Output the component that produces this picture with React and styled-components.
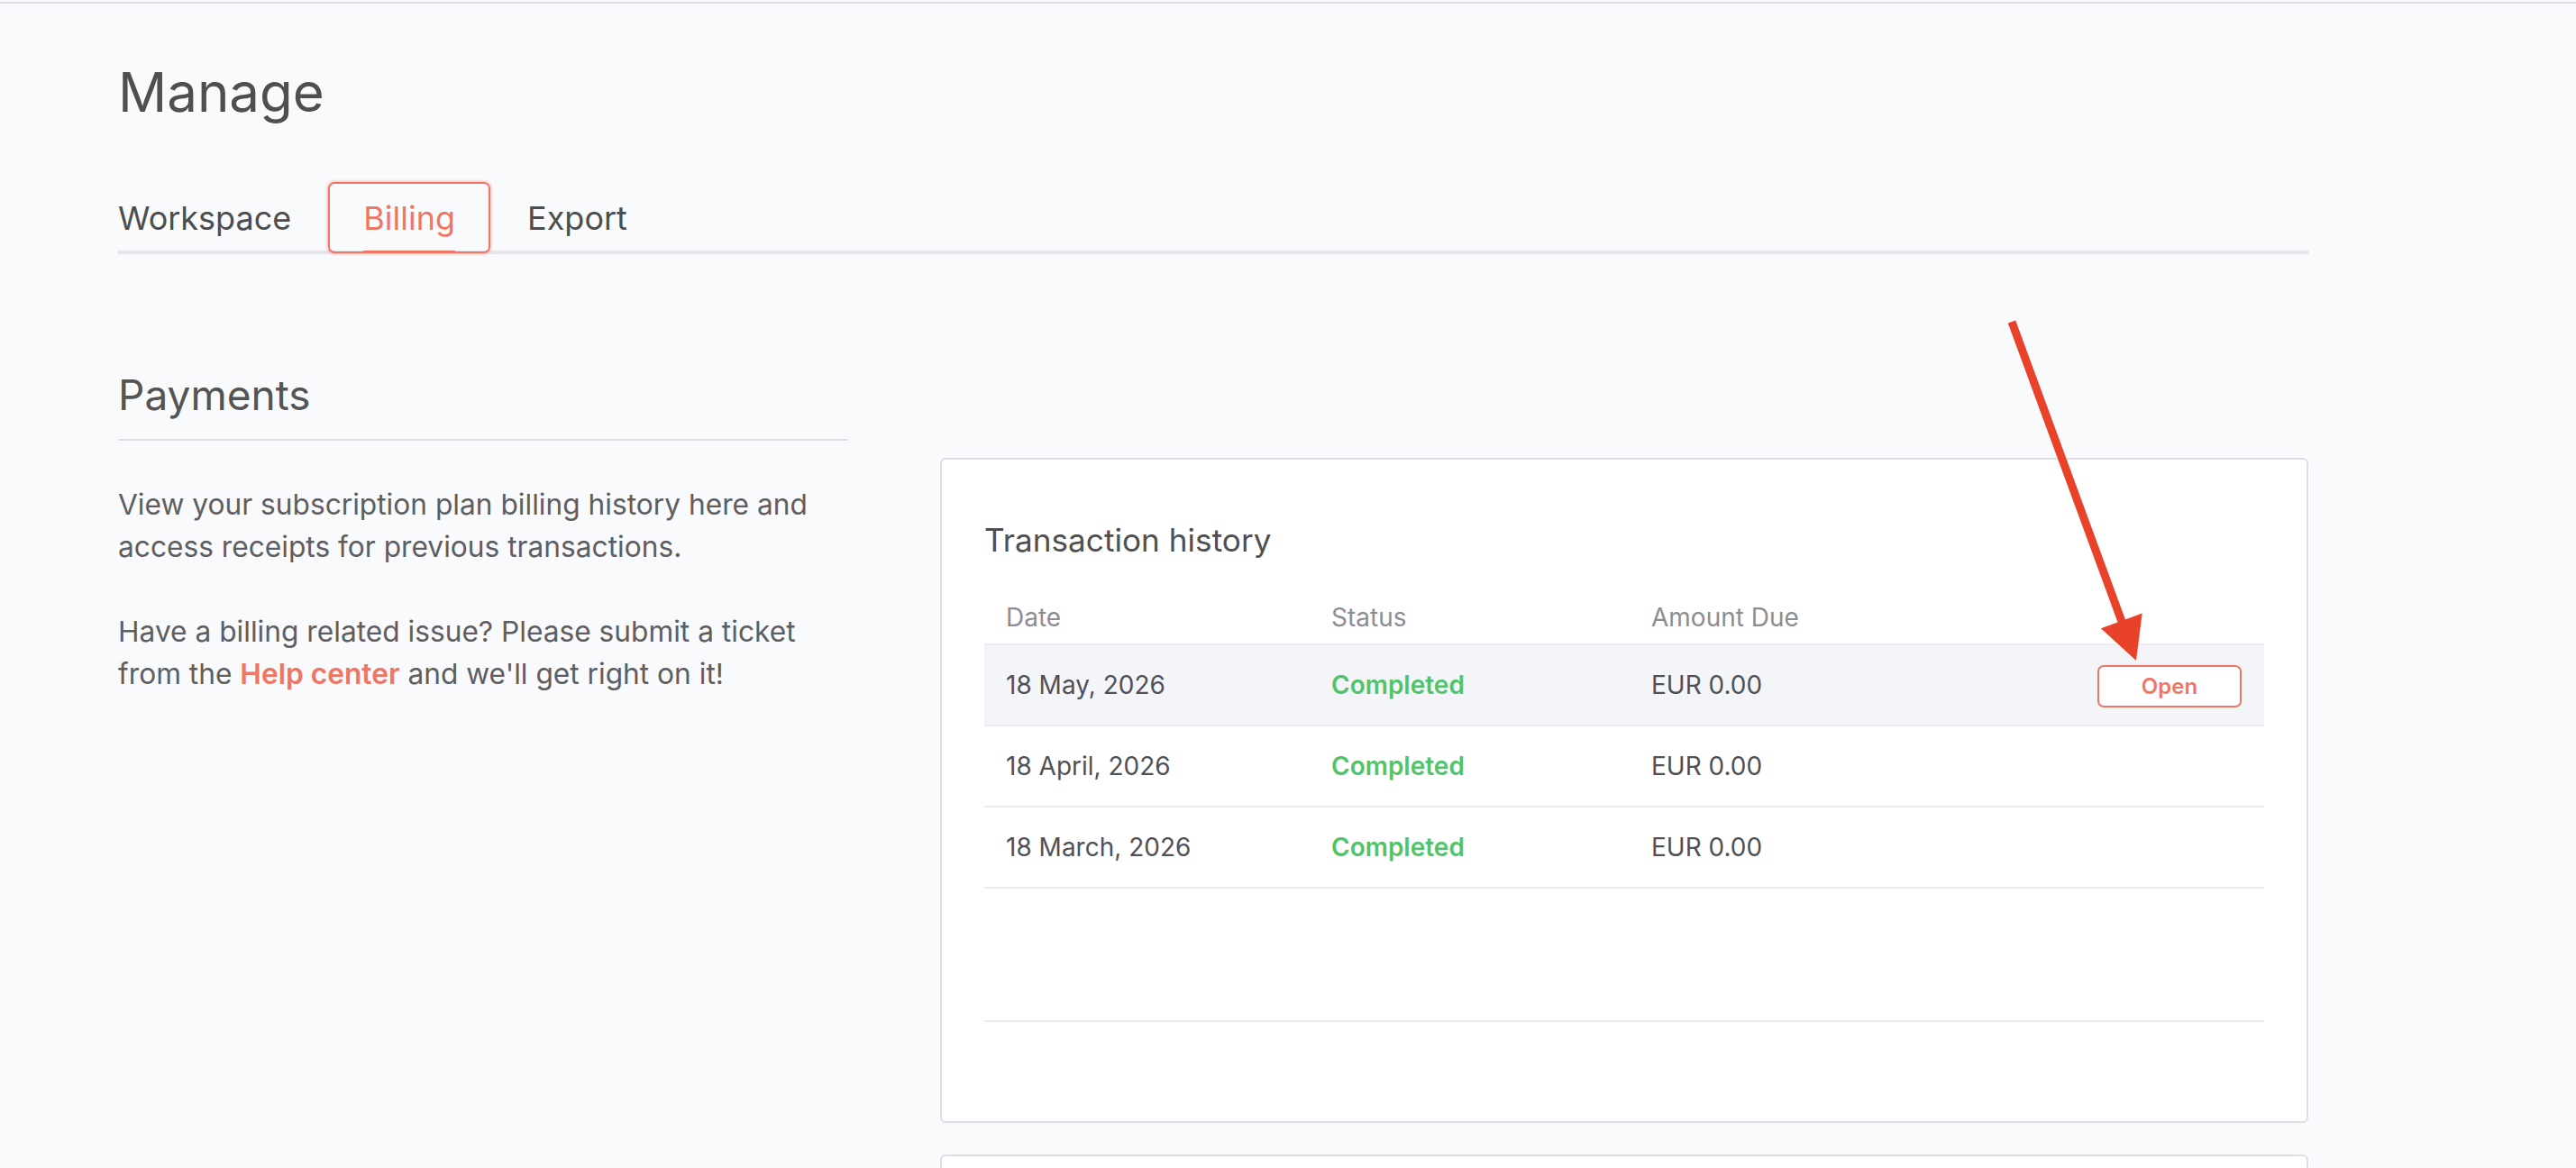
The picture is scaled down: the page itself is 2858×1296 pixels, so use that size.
import styled, { createGlobalStyle } from "styled-components";

const ORANGE = "#ef7664";

const TRANSACTIONS = [
  { date: "18 May, 2026", status: "Completed", amount: "EUR 0.00", open: true },
  { date: "18 April, 2026", status: "Completed", amount: "EUR 0.00" },
  { date: "18 March, 2026", status: "Completed", amount: "EUR 0.00" },
];

const TABS = ["Workspace", "Billing", "Export"];

const App = () => {
  return (
    <Root>
      <GlobalStyle />
      <Page>
        <Main>
          <Title>Manage</Title>
          <TabBar>
            {TABS.map((tab) => (
              <Tab key={tab} active={tab === "Billing"}>
                {tab}
              </Tab>
            ))}
          </TabBar>

          <Section>
            <Side>
              <SideHeading>Payments</SideHeading>
              <Text>
                View your subscription plan billing history here and access
                receipts for previous transactions.
              </Text>
              <Text>
                Have a billing related issue? Please submit a ticket from the{" "}
                <HelpLink>Help center</HelpLink> and we'll get right on it!
              </Text>
            </Side>

            <Cards>
              <Card>
                <CardTitle>Transaction history</CardTitle>
                <Table>
                  <HeadRow>
                    <HeadCell>Date</HeadCell>
                    <HeadCell>Status</HeadCell>
                    <HeadCell>Amount Due</HeadCell>
                    <HeadCell />
                  </HeadRow>
                  {TRANSACTIONS.map((t) => (
                    <Row key={t.date} highlighted={t.open}>
                      <Cell>{t.date}</Cell>
                      <StatusCell>{t.status}</StatusCell>
                      <Cell>{t.amount}</Cell>
                      <Cell>{t.open && <OpenButton>Open</OpenButton>}</Cell>
                    </Row>
                  ))}
                  <TableFooter />
                </Table>
              </Card>
              <Card short />
            </Cards>
          </Section>
        </Main>
      </Page>

      <Arrow width="200" height="420" viewBox="0 0 200 420">
        <line
          x1="32"
          y1="17"
          x2="156"
          y2="355"
          stroke="#e8432a"
          strokeWidth="9"
          strokeLinecap="butt"
        />
        <polygon points="170,393 176.7,340.5 130.9,357.3" fill="#e8432a" />
      </Arrow>
    </Root>
  );
};

const GlobalStyle = createGlobalStyle`
  * { box-sizing: border-box; }
  body {
    margin: 0;
    background: #f9fafc;
    font-family: Inter, "Noto Sans", "Liberation Sans", sans-serif;
  }
`;

const Root = styled.div`
  position: relative;
  padding-top: 2px;
  min-height: 100vh;
  overflow: hidden;
`;

const Page = styled.div`
  border-top: 2px solid #dcdde6;
`;

const Main = styled.div`
  width: 2430px;
  margin-left: 131px;
  padding-top: 62px;
`;

const Title = styled.h1`
  margin: 0;
  font-size: 60px;
  line-height: 73px;
  font-weight: 400;
  color: #4f4f4f;
`;

const TabBar = styled.div`
  display: flex;
  gap: 2px;
  margin-top: 63px;
  height: 80px;
  border-bottom: 4px solid #e4e5ea;
`;

const Tab = styled.div`
  position: relative;
  display: flex;
  align-items: center;
  height: 79px;
  padding: 0 37px;
  border: 2px solid ${({ active }) => (active ? ORANGE : "transparent")};
  border-radius: 7px;
  box-shadow: ${({ active }) =>
    active ? "0 0 3px 1px rgba(239, 118, 100, 0.45)" : "none"};
  font-size: 36px;
  color: ${({ active }) => (active ? ORANGE : "#4d4d4d")};
  cursor: pointer;

  &:first-child {
    padding-left: 0;
    border-left-width: 0;
  }

  &::after {
    content: "";
    display: ${({ active }) => (active ? "block" : "none")};
    position: absolute;
    left: 37px;
    right: 37px;
    bottom: -2px;
    height: 3px;
    background: ${ORANGE};
  }
`;

const Section = styled.div`
  display: grid;
  grid-template-columns: 810px 1518px;
  column-gap: 102px;
  margin-top: 129px;
  align-items: start;
`;

const Side = styled.div`
  display: flex;
  flex-direction: column;
`;

const SideHeading = styled.h2`
  margin: 0;
  padding-bottom: 21px;
  border-bottom: 2px solid #dddee4;
  font-size: 46px;
  line-height: 55px;
  font-weight: 400;
  color: #545454;
`;

const Text = styled.p`
  margin: 47px 0 0;
  font-size: 31.7px;
  line-height: 47px;
  color: #5e5e62;

  & + & {
    margin-top: 47px;
  }
`;

const HelpLink = styled.a`
  color: ${ORANGE};
  font-weight: 600;
  cursor: pointer;
`;

const Cards = styled.div`
  display: flex;
  flex-direction: column;
  gap: 35px;
  margin-top: 97px;
`;

const Card = styled.div`
  background: #fff;
  border: 2px solid #dddee5;
  border-radius: 6px;
  padding: ${({ short }) => (short ? "0" : "69px 47px 110px")};
  height: ${({ short }) => (short ? "200px" : "auto")};
`;

const CardTitle = styled.h3`
  margin: 0 0 48px;
  font-size: 35.2px;
  line-height: 41px;
  font-weight: 400;
  color: #4f4f4f;
`;

const Table = styled.div`
  display: flex;
  flex-direction: column;
`;

const HeadRow = styled.div`
  display: grid;
  grid-template-columns: 361px 355px 1fr auto;
  padding-bottom: 12px;
  border-bottom: 2px solid #eceef3;
`;

const HeadCell = styled.div`
  padding: 0 24px;
  font-size: 28px;
  line-height: 34px;
  color: #8c8c94;
`;

const Row = styled.div`
  display: grid;
  grid-template-columns: 361px 355px 1fr auto;
  align-items: center;
  height: 90px;
  border-bottom: 2px solid #eaecf1;
  background: ${({ highlighted }) => (highlighted ? "#f4f5f9" : "#fff")};
`;

const Cell = styled.div`
  padding: 0 24px;
  font-size: 28px;
  line-height: 34px;
  color: #505058;
`;

const StatusCell = styled(Cell)`
  color: #4fc46a;
  font-weight: 600;
`;

const OpenButton = styled.button`
  width: 160px;
  height: 47px;
  margin-right: 1px;
  margin-top: 3px;
  background: #fff;
  border: 2px solid ${ORANGE};
  border-radius: 7px;
  font-family: Inter, "Noto Sans", sans-serif;
  font-size: 24px;
  font-weight: 600;
  color: ${ORANGE};
  cursor: pointer;
`;

const TableFooter = styled.div`
  height: 148px;
  border-bottom: 2px solid #eaecf1;
`;

const Arrow = styled.svg`
  position: absolute;
  left: 2200px;
  top: 340px;
  pointer-events: none;
`;

export default App;
